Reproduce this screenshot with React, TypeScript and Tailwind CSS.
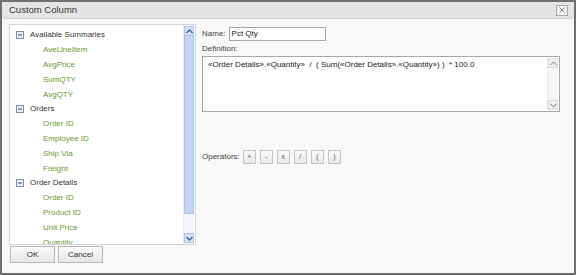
import React from 'react';

const tree = [
  { label: 'Available Summaries', children: ['AveLineItem', 'AvgPrice', 'SumQTY', 'AvgQTY'] },
  { label: 'Orders', children: ['Order ID', 'Employee ID', 'Ship Via', 'Freight'] },
  { label: 'Order Details', children: ['Order ID', 'Product ID', 'Unit Price', 'Quantity'] },
];

const operators = ['+', '-', 'x', '/', '(', ')'];

const MinusBox = () => (
  <svg width="8" height="8" viewBox="0 0 8 8" className="shrink-0">
    <rect x="0.5" y="0.5" width="7" height="7" fill="#e8eef6" stroke="#7d8fa8" />
    <line x1="2" y1="4" x2="6" y2="4" stroke="#3d4f6a" strokeWidth="1" />
  </svg>
);

const Chevron = ({ down = false, color = '#3a5fb0' }: { down?: boolean; color?: string }) => (
  <svg width="7" height="5" viewBox="0 0 7 5">
    <path d={down ? 'M0.5 1 L3.5 4 L6.5 1' : 'M0.5 4 L3.5 1 L6.5 4'} fill="none" stroke={color} strokeWidth="1.4" />
  </svg>
);

const App = () => {
  return (
    <div
      className="w-[576px] h-[275px] bg-[#f8f8f8] border-2 border-[#6f6f6f] flex flex-col text-[#333]"
      style={{ fontFamily: '"Liberation Sans", Arial, sans-serif' }}
    >
      {/* Title bar */}
      <div className="h-[17px] bg-[#e5e5e5] border-b border-[#d2d2d2] flex items-center justify-between pl-[7px] pr-[6px]">
        <span className="text-[9.5px] text-[#333]">Custom Column</span>
        <div className="w-[12px] h-[11px] border border-[#a8a8a8] bg-[#f2f2f2] flex items-center justify-center">
          <svg width="6" height="6" viewBox="0 0 6 6">
            <path d="M0.5 0.5 L5.5 5.5 M5.5 0.5 L0.5 5.5" stroke="#888" strokeWidth="1" />
          </svg>
        </div>
      </div>

      <div className="flex flex-1 pl-[7px] pt-[5px]">
        {/* Left column */}
        <div className="w-[187px] flex flex-col">
          <div className="h-[221px] border border-[#d4d4d4] bg-white flex">
            <div className="flex-1 overflow-hidden pt-[3px] pl-[6px]">
              {tree.map((group) => (
                <div key={group.label}>
                  <div className="h-[14.8px] flex items-center gap-[6px] text-[8px] text-[#333]">
                    <MinusBox />
                    <span>{group.label}</span>
                  </div>
                  {group.children.map((child) => (
                    <div key={child} className="h-[14.8px] flex items-center pl-[27px] text-[8px] text-[#6b9a32]">
                      {child}
                    </div>
                  ))}
                </div>
              ))}
            </div>
            {/* Scrollbar */}
            <div className="w-[11px] mr-[1px] flex flex-col bg-[#f4f6fb] border-l border-[#e4e8f0]">
              <div className="h-[10px] mt-[1px] flex items-center justify-center bg-[#d6e2f8] border border-[#b0c4ea]">
                <Chevron />
              </div>
              <div className="h-[178px] bg-[#c4d5f6] border border-[#a9bfeb] border-t-0" />
              <div className="flex-1" />
              <div className="h-[10px] mb-[1px] flex items-center justify-center bg-[#d6e2f8] border border-[#b0c4ea]">
                <Chevron down />
              </div>
            </div>
          </div>
          <div className="flex gap-[3px] mt-[1px] pl-[1px]">
            <button className="w-[45px] h-[17px] border border-[#b8b8b8] bg-gradient-to-b from-[#fafafa] to-[#e6e6e6] text-[8px] text-[#333]">
              OK
            </button>
            <button className="w-[45px] h-[17px] border border-[#b8b8b8] bg-gradient-to-b from-[#fafafa] to-[#e6e6e6] text-[8px] text-[#333]">
              Cancel
            </button>
          </div>
        </div>

        {/* Right column */}
        <div className="flex-1 pl-[6px] pr-[14px] pt-[3px] flex flex-col">
          <div className="flex items-center gap-[3px]">
            <span className="text-[8px] text-[#444]">Name:</span>
            <div className="w-[97px] h-[14px] border border-[#a8a8a8] bg-white flex items-center pl-[2px] text-[8px] text-[#222]">
              Pct Qty
            </div>
          </div>
          <div className="mt-[2px] text-[8px] text-[#444] leading-[11px]">Definition:</div>
          <div className="mt-[2px] h-[56px] border border-[#a8a8a8] bg-white flex">
            <div className="flex-1 pl-[5px] pt-[2px] text-[8px] text-[#222] whitespace-pre">
              {'«Order Details».«Quantity»  /  ( Sum(«Order Details».«Quantity») )  * 100.0'}
            </div>
            <div className="w-[11px] my-[1px] mr-[1px] flex flex-col justify-between bg-[#f6f6f6] border-l border-[#ececec]">
              <div className="h-[10px] flex items-center justify-center border border-[#dadada] bg-[#f0f0f0]">
                <Chevron color="#b0b0b0" />
              </div>
              <div className="h-[10px] flex items-center justify-center border border-[#dadada] bg-[#f0f0f0]">
                <Chevron down color="#b0b0b0" />
              </div>
            </div>
          </div>
          <div className="mt-[38px] flex items-center">
            <span className="text-[8px] text-[#444] mr-[3px]">Operators:</span>
            <div className="flex gap-[4px]">
              {operators.map((op) => (
                <div
                  key={op}
                  className="w-[13px] h-[14px] border border-[#c4c4c4] bg-gradient-to-b from-[#fbfbfb] to-[#e8e8e8] flex items-center justify-center text-[7px] text-[#555]"
                >
                  {op}
                </div>
              ))}
            </div>
          </div>
        </div>
      </div>
    </div>
  );
};

export default App;
